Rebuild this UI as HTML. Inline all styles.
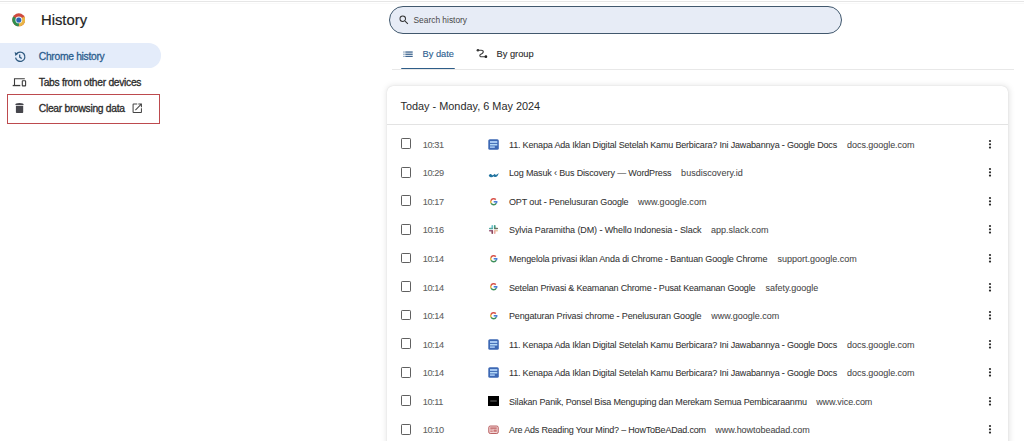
<!DOCTYPE html>
<html><head><meta charset="utf-8">
<style>
*{box-sizing:border-box;margin:0;padding:0}
html,body{width:1024px;height:441px;overflow:hidden;background:#fff;font-family:"Liberation Sans",sans-serif;color:#202124}
.abs{position:absolute}
#topline{left:0;top:1px;width:1024px;height:1px;background:#e6e6e6}
#title{left:41px;top:10px;font-size:14.8px;line-height:20px;color:#1f1f1f;-webkit-text-stroke:0.2px currentColor}
#pill{left:0;top:43.3px;width:161px;height:24.6px;background:#e4ecfa;border-radius:0 12.3px 12.3px 0}
.nav{left:38.8px;font-size:10.3px;line-height:12px;letter-spacing:-0.3px;color:#2b2b2b;-webkit-text-stroke:0.3px currentColor}
#redbox{left:7.2px;top:94.2px;width:153px;height:29.8px;border:1.8px solid #bd4a4e}
#search{left:389px;top:6px;width:452.5px;height:27.8px;border:1.9px solid #41586d;border-radius:14px;background:#e7ecf6}
#stext{left:413.5px;top:14px;font-size:8.4px;line-height:12px;color:#484848}
.tab{top:48px;font-size:9.3px;line-height:12px;-webkit-text-stroke:0.1px currentColor}
#uline{left:401.2px;top:67.6px;width:53.6px;height:2.2px;background:#2e5d88;border-radius:1.1px}
#tabdiv{left:392px;top:68.9px;width:622px;height:1px;background:#e8e8e8}
#card{left:386.5px;top:85.6px;width:621.5px;height:400px;background:#fff;border-radius:6px;box-shadow:0 0 1px rgba(0,0,0,.16),0.5px 0.5px 6px rgba(0,0,0,.13)}
#hdr{left:400.5px;top:99px;font-size:10.9px;line-height:14px;color:#2a2a2a}
#hdrdiv{left:386.5px;top:123.5px;width:621.5px;height:1px;background:#e3e3e3}
.row{left:386.5px;width:621.5px;height:28.55px}
.cb{position:absolute;left:14.4px;top:8.4px;width:10.6px;height:10.8px;border:1.5px solid #606060;border-radius:1.2px}
.tm{position:absolute;left:36.3px;top:8.8px;font-size:9.2px;line-height:12px;color:#5e5e5e;letter-spacing:-0.45px;-webkit-text-stroke:0.08px currentColor}
.fav{position:absolute;left:101.5px;top:8.7px;width:11px;height:11px}
.ti{position:absolute;left:122.5px;top:8.8px;font-size:9px;line-height:12px;color:#333;white-space:nowrap;-webkit-text-stroke:0.06px currentColor}
.ti.dm{color:#474747}
.kb{position:absolute;left:600.7px;top:8.8px;width:6px;height:12px;fill:#2a2a2a}
.kb i{position:absolute;left:0.55px;width:1.9px;height:1.9px;border-radius:50%;background:#2a2a2a}
</style></head>
<body>
<div id="topline" class="abs"></div><div class="abs" style="left:0;top:3px;width:1024px;height:1px;background:#f9f9f9"></div>

<!-- chrome logo -->
<svg class="abs" style="left:11.9px;top:13px" width="13.6" height="13.6" viewBox="0 0 48 48">
  <circle cx="24" cy="24" r="23" fill="#cf4a3f"/>
  <path d="M24 24 L43.9 12.5 A23 23 0 0 1 24 47 Z" fill="#e9b545"/>
  <path d="M24 24 L24 47 A23 23 0 0 1 4.1 12.5 Z" fill="#2f8f4e"/>
  <circle cx="24" cy="24.5" r="12" fill="#eef3f8"/>
  <circle cx="24" cy="24.5" r="9" fill="#2b64b4"/>
</svg>
<div id="title" class="abs">History</div>

<div id="pill" class="abs"></div>
<!-- history icon -->
<svg class="abs" style="left:13px;top:50px" width="14" height="14" viewBox="0 0 14 14"><g fill="none" stroke="#2e5a80" stroke-width="1.25"><path d="M3.35 4.05A4.7 4.7 0 1 1 2.57 7.57"/><path d="M6.7 4.5V7.1L8.7 8.6"/></g><path d="M1.6 2.0L5.2 3.7L2.4 6.0Z" fill="#2e5a80"/></svg>
<div class="abs nav" style="top:50.5px;color:#2b5d8e">Chrome history</div>

<!-- devices icon -->
<svg class="abs" style="left:12px;top:77px" width="15" height="10" viewBox="0 0 15 10"><g fill="none" stroke="#3c3c3c" stroke-width="1.1"><path d="M2.5 8.4V1.7H12.8"/><rect x="10.3" y="3.7" width="3.3" height="5.2" rx=".5"/></g><rect x="0.7" y="7.9" width="7.6" height="1.3" fill="#3c3c3c"/></svg>
<div class="abs nav" style="top:76.5px">Tabs from other devices</div>

<div id="redbox" class="abs"></div>
<!-- delete icon -->
<svg class="abs" style="left:14px;top:102px" width="11" height="12" viewBox="0 0 11 12"><path d="M1.3 2.9C1.3 1.8 2.5 1.1 5.5 1.1S9.7 1.8 9.7 2.9Z" fill="#46464c"/><path d="M1.9 3.7H9.2V10C9.2 10.6 8.8 11 8.2 11H2.9C2.3 11 1.9 10.6 1.9 10Z" fill="#46464c"/></svg>
<div class="abs nav" style="top:102.5px">Clear browsing data</div>
<!-- open in new -->
<svg class="abs" style="left:130.5px;top:102px" width="12.5" height="12.5" viewBox="0 0 24 24"><path fill="#444" d="M19 19H5V5h7V3H5a2 2 0 0 0-2 2v14a2 2 0 0 0 2 2h14c1.1 0 2-.9 2-2v-7h-2v7zM14 3v2h3.59l-9.83 9.83 1.41 1.41L19 6.41V10h2V3h-7z"/></svg>

<!-- search -->
<div id="search" class="abs"></div>
<svg class="abs" style="left:397.5px;top:14px" width="12" height="12" viewBox="0 0 24 24"><path fill="#333" d="M15.5 14h-.79l-.28-.27A6.471 6.471 0 0 0 16 9.5 6.5 6.5 0 1 0 9.5 16c1.61 0 3.09-.59 4.23-1.57l.27.28v.79l5 4.99L20.49 19l-4.99-5zm-6 0C7.01 14 5 11.99 5 9.5S7.01 5 9.5 5 14 7.01 14 9.5 11.99 14 9.5 14z"/></svg>
<div id="stext" class="abs">Search history</div>

<!-- tabs -->
<svg class="abs" style="left:403px;top:50.5px" width="10" height="6.5" viewBox="0 0 10 6.5"><g fill="#3f6690"><rect x="0.3" y="0.4" width="1.3" height="1.3" opacity=".7"/><rect x="0.3" y="2.6" width="1.3" height="1.3" opacity=".7"/><rect x="0.3" y="4.8" width="1.3" height="1.3" opacity=".7"/><rect x="2.3" y="0.4" width="7.4" height="1.3"/><rect x="2.3" y="2.6" width="7.4" height="1.3"/><rect x="2.3" y="4.8" width="7.4" height="1.3"/></g></svg>
<div class="abs tab" style="left:422.5px;color:#2b5d8e">By date</div>
<svg class="abs" style="left:475px;top:47px" width="14" height="13" viewBox="0 0 14 13"><path d="M2.9 3.2H6.2C7.9 3.2 8.6 4.4 8.1 5.6C7.7 6.5 6.6 6.9 5.7 7.3C4.6 7.8 4.5 9.4 5.6 9.6L10.9 9.7" fill="none" stroke="#3a3a3a" stroke-width="1.15" stroke-linecap="round"/><circle cx="2.9" cy="3.2" r="1.3" fill="#3a3a3a"/><circle cx="10.9" cy="9.7" r="1.35" fill="#222"/></svg>
<div class="abs tab" style="left:496.5px;color:#2b2b2b">By group</div>
<div id="uline" class="abs"></div>
<div id="tabdiv" class="abs"></div>

<!-- card -->
<div id="card" class="abs"></div>
<div id="hdr" class="abs">Today - Monday, 6 May 2024</div>
<div id="hdrdiv" class="abs"></div>

<!--ROWS-->
<div class="abs row" style="top:130.00px"><div class="cb"></div><div class="tm">10:31</div><svg class="fav" viewBox="0 0 22 22"><rect x="0.6" y="0.6" width="21" height="21" rx="3" fill="#3d68b4"/><rect x="4" y="4" width="14.6" height="4" fill="#a6c8f2"/><rect x="4" y="9.8" width="14.6" height="3.2" fill="#b4d8f6"/><rect x="4" y="14.6" width="9.6" height="3.2" fill="#a6c8f2"/></svg><div class="ti" style="letter-spacing:-0.18px">11. Kenapa Ada Iklan Digital Setelah Kamu Berbicara? Ini Jawabannya - Google Docs</div><div class="ti dm" style="left:460.60px;letter-spacing:-0.05px">docs.google.com</div><svg class="kb" viewBox="0 0 6 12"><circle cx="3" cy="2" r="1.1"/><circle cx="3" cy="5.3" r="1.1"/><circle cx="3" cy="8.6" r="1.1"/></svg></div>
<div class="abs row" style="top:158.55px"><div class="cb"></div><div class="tm">10:29</div><svg class="fav" viewBox="0 0 22 22"><path d="M1.5 17.5C3 13.5 6 13.5 8 15.8C9.8 17.6 11.8 15 13 13.5C14 16 17 17 21.5 12C20.5 17 17 21 13.5 20C12.5 19.7 11.8 19.2 11.2 18.6C9.5 20.5 6.5 21 4.2 19.8C3 19.3 2 18.5 1.5 17.5Z" fill="#2274a0"/></svg><div class="ti" style="letter-spacing:-0.15px">Log Masuk ‹ Bus Discovery — WordPress</div><div class="ti dm" style="left:294.60px;letter-spacing:0.03px">busdiscovery.id</div><svg class="kb" viewBox="0 0 6 12"><circle cx="3" cy="2" r="1.1"/><circle cx="3" cy="5.3" r="1.1"/><circle cx="3" cy="8.6" r="1.1"/></svg></div>
<div class="abs row" style="top:187.10px"><div class="cb"></div><div class="tm">10:17</div><svg class="fav" viewBox="0 0 22 22"><g fill="none" stroke-width="3" transform="translate(0,1.1)"><path d="M15.64 6.16A6 6 0 0 0 5.76 8.35" stroke="#d9534a"/><path d="M5.76 8.35A6 6 0 0 0 6.2 13.4" stroke="#e0b43a"/><path d="M6.2 13.4A6 6 0 0 0 16.6 13.4" stroke="#3c8f5a"/><path d="M16.6 13.4A6 6 0 0 0 17.4 10.4H11.4" stroke="#4a7fd8"/></g></svg><div class="ti" style="letter-spacing:-0.14px">OPT out - Penelusuran Google</div><div class="ti dm" style="left:251.50px;letter-spacing:0.03px">www.google.com</div><svg class="kb" viewBox="0 0 6 12"><circle cx="3" cy="2" r="1.1"/><circle cx="3" cy="5.3" r="1.1"/><circle cx="3" cy="8.6" r="1.1"/></svg></div>
<div class="abs row" style="top:215.65px"><div class="cb"></div><div class="tm">10:16</div><svg class="fav" viewBox="0 0 22 22"><g stroke-width="3.3" stroke-linecap="round"><path d="M8.5 3.5v5.5" stroke="#6cc4cc"/><path d="M3.5 9h5" stroke="#56a8a0"/><path d="M13.5 3.5v5.5" stroke="#3f9a80"/><path d="M14 9h4.5" stroke="#707060"/><path d="M14 13.5h4.5" stroke="#e8c8a0"/><path d="M13.5 14v4.5" stroke="#eeaaa0"/><path d="M8.5 13.5v5" stroke="#8a4458"/><path d="M3.5 13.5h5" stroke="#9a5a78"/></g></svg><div class="ti" style="letter-spacing:-0.096px">Sylvia Paramitha (DM) - Whello Indonesia - Slack</div><div class="ti dm" style="left:324.40px;letter-spacing:0px">app.slack.com</div><svg class="kb" viewBox="0 0 6 12"><circle cx="3" cy="2" r="1.1"/><circle cx="3" cy="5.3" r="1.1"/><circle cx="3" cy="8.6" r="1.1"/></svg></div>
<div class="abs row" style="top:244.20px"><div class="cb"></div><div class="tm">10:14</div><svg class="fav" viewBox="0 0 22 22"><g fill="none" stroke-width="3" transform="translate(0,1.1)"><path d="M15.64 6.16A6 6 0 0 0 5.76 8.35" stroke="#d9534a"/><path d="M5.76 8.35A6 6 0 0 0 6.2 13.4" stroke="#e0b43a"/><path d="M6.2 13.4A6 6 0 0 0 16.6 13.4" stroke="#3c8f5a"/><path d="M16.6 13.4A6 6 0 0 0 17.4 10.4H11.4" stroke="#4a7fd8"/></g></svg><div class="ti" style="letter-spacing:-0.118px">Mengelola privasi iklan Anda di Chrome - Bantuan Google Chrome</div><div class="ti dm" style="left:391.10px;letter-spacing:0px">support.google.com</div><svg class="kb" viewBox="0 0 6 12"><circle cx="3" cy="2" r="1.1"/><circle cx="3" cy="5.3" r="1.1"/><circle cx="3" cy="8.6" r="1.1"/></svg></div>
<div class="abs row" style="top:272.75px"><div class="cb"></div><div class="tm">10:14</div><svg class="fav" viewBox="0 0 22 22"><g fill="none" stroke-width="3" transform="translate(0,1.1)"><path d="M15.64 6.16A6 6 0 0 0 5.76 8.35" stroke="#d9534a"/><path d="M5.76 8.35A6 6 0 0 0 6.2 13.4" stroke="#e0b43a"/><path d="M6.2 13.4A6 6 0 0 0 16.6 13.4" stroke="#3c8f5a"/><path d="M16.6 13.4A6 6 0 0 0 17.4 10.4H11.4" stroke="#4a7fd8"/></g></svg><div class="ti" style="letter-spacing:-0.2px">Setelan Privasi &amp; Keamanan Chrome - Pusat Keamanan Google</div><div class="ti dm" style="left:378.90px;letter-spacing:0px">safety.google</div><svg class="kb" viewBox="0 0 6 12"><circle cx="3" cy="2" r="1.1"/><circle cx="3" cy="5.3" r="1.1"/><circle cx="3" cy="8.6" r="1.1"/></svg></div>
<div class="abs row" style="top:301.30px"><div class="cb"></div><div class="tm">10:14</div><svg class="fav" viewBox="0 0 22 22"><g fill="none" stroke-width="3" transform="translate(0,1.1)"><path d="M15.64 6.16A6 6 0 0 0 5.76 8.35" stroke="#d9534a"/><path d="M5.76 8.35A6 6 0 0 0 6.2 13.4" stroke="#e0b43a"/><path d="M6.2 13.4A6 6 0 0 0 16.6 13.4" stroke="#3c8f5a"/><path d="M16.6 13.4A6 6 0 0 0 17.4 10.4H11.4" stroke="#4a7fd8"/></g></svg><div class="ti" style="letter-spacing:-0.135px">Pengaturan Privasi chrome - Penelusuran Google</div><div class="ti dm" style="left:324.70px;letter-spacing:0px">www.google.com</div><svg class="kb" viewBox="0 0 6 12"><circle cx="3" cy="2" r="1.1"/><circle cx="3" cy="5.3" r="1.1"/><circle cx="3" cy="8.6" r="1.1"/></svg></div>
<div class="abs row" style="top:329.85px"><div class="cb"></div><div class="tm">10:14</div><svg class="fav" viewBox="0 0 22 22"><rect x="0.6" y="0.6" width="21" height="21" rx="3" fill="#3d68b4"/><rect x="4" y="4" width="14.6" height="4" fill="#a6c8f2"/><rect x="4" y="9.8" width="14.6" height="3.2" fill="#b4d8f6"/><rect x="4" y="14.6" width="9.6" height="3.2" fill="#a6c8f2"/></svg><div class="ti" style="letter-spacing:-0.18px">11. Kenapa Ada Iklan Digital Setelah Kamu Berbicara? Ini Jawabannya - Google Docs</div><div class="ti dm" style="left:460.60px;letter-spacing:-0.05px">docs.google.com</div><svg class="kb" viewBox="0 0 6 12"><circle cx="3" cy="2" r="1.1"/><circle cx="3" cy="5.3" r="1.1"/><circle cx="3" cy="8.6" r="1.1"/></svg></div>
<div class="abs row" style="top:358.40px"><div class="cb"></div><div class="tm">10:14</div><svg class="fav" viewBox="0 0 22 22"><rect x="0.6" y="0.6" width="21" height="21" rx="3" fill="#3d68b4"/><rect x="4" y="4" width="14.6" height="4" fill="#a6c8f2"/><rect x="4" y="9.8" width="14.6" height="3.2" fill="#b4d8f6"/><rect x="4" y="14.6" width="9.6" height="3.2" fill="#a6c8f2"/></svg><div class="ti" style="letter-spacing:-0.18px">11. Kenapa Ada Iklan Digital Setelah Kamu Berbicara? Ini Jawabannya - Google Docs</div><div class="ti dm" style="left:460.60px;letter-spacing:-0.05px">docs.google.com</div><svg class="kb" viewBox="0 0 6 12"><circle cx="3" cy="2" r="1.1"/><circle cx="3" cy="5.3" r="1.1"/><circle cx="3" cy="8.6" r="1.1"/></svg></div>
<div class="abs row" style="top:386.95px"><div class="cb"></div><div class="tm">10:11</div><svg class="fav" viewBox="0 0 22 22"><rect x="0" y="0" width="22" height="20" fill="#000"/><rect x="4.5" y="9" width="13" height="2" fill="#6a6a6a"/></svg><div class="ti" style="letter-spacing:-0.19px">Silakan Panik, Ponsel Bisa Menguping dan Merekam Semua Pembicaraanmu</div><div class="ti dm" style="left:429.70px;letter-spacing:-0.08px">www.vice.com</div><svg class="kb" viewBox="0 0 6 12"><circle cx="3" cy="2" r="1.1"/><circle cx="3" cy="5.3" r="1.1"/><circle cx="3" cy="8.6" r="1.1"/></svg></div>
<div class="abs row" style="top:415.50px"><div class="cb"></div><div class="tm">10:10</div><svg class="fav" viewBox="0 0 22 22"><rect x="1.5" y="4" width="19" height="15" rx="3" fill="#f2d4d4" stroke="#b04a4c" stroke-width="1.7"/><rect x="4.5" y="7" width="13" height="2.4" fill="#b85658"/><rect x="4.5" y="11" width="5" height="1.8" fill="#c77"/><rect x="11" y="11" width="6.5" height="4.6" fill="#c77"/><rect x="4.5" y="13.8" width="5" height="1.8" fill="#c77"/></svg><div class="ti" style="letter-spacing:-0.2px">Are Ads Reading Your Mind? – HowToBeADad.com</div><div class="ti dm" style="left:328.80px;letter-spacing:-0.04px">www.howtobeadad.com</div><svg class="kb" viewBox="0 0 6 12"><circle cx="3" cy="2" r="1.1"/><circle cx="3" cy="5.3" r="1.1"/><circle cx="3" cy="8.6" r="1.1"/></svg></div>
<!--/ROWS-->
</body></html>
